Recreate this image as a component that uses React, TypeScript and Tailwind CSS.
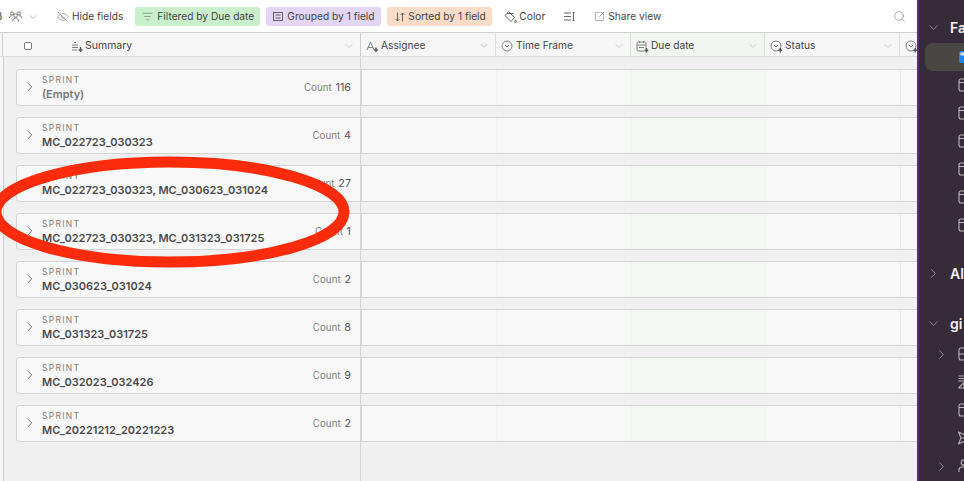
import { ChevronDown, ChevronRight, EyeOff, ListFilter, SquareArrowOutUpRight, Search } from "lucide-react";

const groups = [
  { name: "(Empty)", count: 116, empty: true },
  { name: "MC_022723_030323", count: 4 },
  { name: "MC_022723_030323, MC_030623_031024", count: 27 },
  { name: "MC_022723_030323, MC_031323_031725", count: 1 },
  { name: "MC_030623_031024", count: 2 },
  { name: "MC_031323_031725", count: 8 },
  { name: "MC_032023_032426", count: 9 },
  { name: "MC_20221212_20221223", count: 2 },
];

type Kind = "summary" | "text" | "select" | "selectPlus" | "date";

// little field type icons in the header
function TypeIcon({ kind }: { kind: Kind }) {
  return (
    <svg width="13" height="13" viewBox="0 0 13 13" fill="none" stroke="#777" strokeWidth="0.9" className="shrink-0">
      {kind === "summary" && (
        <>
          <path d="M3 2.5h2M1 5h6M1 7.5h6M1 10h5" />
          <path d="M9.5 7v5M7.5 10h4" strokeWidth="1.4" stroke="#555" />
        </>
      )}
      {kind === "text" && (
        <>
          <path d="M1 10l3.5-8L8 10M2.2 7.5h4.6" />
          <path d="M10 7.5v4.5M8.2 10h3.6" strokeWidth="1.4" stroke="#555" />
        </>
      )}
      {(kind === "select" || kind === "selectPlus") && (
        <>
          <circle cx="6" cy="6" r="5" />
          <path d="M4 5l2 2 2-2" />
        </>
      )}
      {kind === "selectPlus" && <path d="M10.3 8v4.5M8.5 10.3h3.6" strokeWidth="1.4" stroke="#555" />}
      {kind === "date" && (
        <>
          <rect x="1" y="2" width="9" height="9" rx="1.5" />
          <path d="M1 5h9M3.5 1v2M7.5 1v2M3 7.5h5" />
          <path d="M10.5 8v4.5M8.7 10.5h3.6" strokeWidth="1.4" stroke="#555" />
        </>
      )}
    </svg>
  );
}

function HeaderCell({ label, kind, width, green }: { label: string; kind: Kind; width: string; green?: boolean }) {
  return (
    <div className={`flex items-center shrink-0 pt-[3px] pl-[5px] pr-[5px] gap-[2px] border-r border-[#dcdcdc] ${width} ${green ? "bg-[#f1f6f0]" : ""}`}>
      <TypeIcon kind={kind} />
      <span className="text-[10.2px] text-[#444]">{label}</span>
      <ChevronDown size={12} strokeWidth={1} className="ml-auto text-[#999]" />
    </div>
  );
}

function GroupRow({ name, count, empty }: { name: string; count: number; empty?: boolean }) {
  return (
    <div className="flex h-[37px] shrink-0">
      <div className="flex items-center w-[345px] ml-[13px] pl-[6px] pr-[10px] bg-[#f8f8f8] border border-r-0 border-[#d4d4d4] rounded-l-[4px]">
        <ChevronRight size={14} strokeWidth={1.1} className="text-[#333] shrink-0 -mt-[1px]" />
        <div className="ml-[5px] flex flex-col leading-none pt-[1px]">
          <span className="text-[8.5px] tracking-[1.3px] text-[#808080] mb-[5px]">SPRINT</span>
          <span className={`text-[11px] font-semibold ${empty ? "text-[#777]" : "text-[#4a4a4a]"}`}>{name}</span>
        </div>
        <span className="ml-auto text-[9.8px] text-[#808080] pt-[2px]">
          Count <span className="ml-[1px] text-[10.8px] text-[#555]">{count}</span>
        </span>
      </div>
      <div className="flex flex-1 bg-[#f8f8f8] border-y border-l border-[#d4d4d4]">
        <div className="w-[135px] border-r border-[#f0f0f0]" />
        <div className="w-[135px] border-r border-[#f0f0f0]" />
        <div className="w-[134px] bg-[#f3f8f2] border-r border-[#f0f0f0]" />
        <div className="w-[135px] border-r border-[#ececec]" />
      </div>
    </div>
  );
}

function TableGlyph({ variant = "table" }: { variant?: "table" | "grid" | "form" | "plane" | "group" }) {
  const color = "#b9b5ba";
  return (
    <svg width="14" height="14" viewBox="0 0 14 14" fill="none" stroke={color} strokeWidth="1.1" className="shrink-0">
      {variant === "table" && (
        <>
          <rect x="1" y="1" width="13" height="12" rx="2" />
          <path d="M1 4.5h13" />
        </>
      )}
      {variant === "grid" && (
        <>
          <rect x="1" y="1" width="13" height="12" rx="2" />
          <path d="M1 7h13M7 1v12" />
        </>
      )}
      {variant === "form" && <path d="M0.5 1h13M0.5 3.5h13M0.5 6h6M0.5 13L6 7.5v5.5M0.5 13h6" />}
      {variant === "plane" && <path d="M0.5 1L13 7 0.5 13 3 7zM3 7h9" />}
      {variant === "group" && (
        <>
          <circle cx="6" cy="3.5" r="2.8" />
          <path d="M1 13v-2a3 3 0 0 1 3-3h9" />
        </>
      )}
    </svg>
  );
}

const lowerIcons = ["grid", "form", "table", "plane", "group"] as const;

export default function App() {
  return (
    <div className="relative flex w-[964px] h-[481px] overflow-hidden bg-white font-['Inter',sans-serif]">
      <div className="flex flex-col w-[917px] shrink-0">
        {/* toolbar */}
        <div className="flex items-center h-[33px] pt-[1px] shrink-0 border-b border-[#cfcfcf] text-[10.2px] text-[#444] relative">
          <span className="-ml-[4px] w-[11px]">3</span>
          <svg width="13" height="11" viewBox="0 0 13 11" fill="none" stroke="#555" strokeWidth="0.8" className="ml-[2px]">
            <circle cx="3" cy="2.5" r="1.6" />
            <circle cx="10" cy="2.5" r="1.6" />
            <circle cx="6.5" cy="4.5" r="1.8" />
            <path d="M0.5 7c0-1.5 1-2.5 2-2.5M12.5 7c0-1.5-1-2.5-2-2.5M3.5 10.500c0-2 1.300-3.500 3-3.500s3 1.500 3 3.500" />
          </svg>
          <ChevronDown size={12} strokeWidth={1} className="ml-[5px] text-[#777]" />
          <EyeOff size={12} strokeWidth={1} className="ml-[18px] text-[#555]" />
          <span className="ml-[3px]">Hide fields</span>
          <div className="flex items-center h-[19px] w-[125px] ml-[12px] pl-[7px] gap-[4px] rounded-[3px] bg-[#c9f0cb]">
            <ListFilter size={11} strokeWidth={1} />
            <span>Filtered by Due date</span>
          </div>
          <div className="flex items-center h-[19px] w-[115px] ml-[6px] pl-[7px] gap-[4px] rounded-[3px] bg-[#e3d5f6]">
            <svg width="10" height="9" viewBox="0 0 10 9" fill="none" stroke="#555" strokeWidth="0.9">
              <rect x="0.5" y="0.5" width="9" height="8" />
              <path d="M2.5 3h5M2.5 6h5" />
            </svg>
            <span>Grouped by 1 field</span>
          </div>
          <div className="flex items-center h-[19px] w-[105px] ml-[6px] pl-[8px] gap-[3px] rounded-[3px] bg-[#fbdcc9]">
            <svg width="10" height="10" viewBox="0 0 10 10" fill="none" stroke="#555" strokeWidth="0.9">
              <path d="M2.500 0.500v8.500M0.700 7l1.800 2 1.800-2M7.500 9.500V1M5.700 3l1.800-2 1.800 2" />
            </svg>
            <span>Sorted by 1 field</span>
          </div>
          <svg width="13" height="13" viewBox="0 0 13 13" fill="none" stroke="#555" strokeWidth="0.9" className="ml-[12px]">
            <path d="M4.500 1.500l6 6-3.500 4L1.200 5.700zM3 3.500h6.500M11.500 10c-.6.800-.9 1.300-.9 1.700a.9.900 0 0 0 1.800 0c0-.4-.3-.9-.9-1.700z" />
          </svg>
          <span className="ml-[2px]">Color</span>
          <svg width="11" height="9" viewBox="0 0 11 9" fill="none" stroke="#555" strokeWidth="0.9" className="ml-[19px]">
            <path d="M0 1h7M0 4.500h7M0 8h7M9.500 0.500v8M8.500 0.500h2M8.500 8.500h2" />
          </svg>
          <SquareArrowOutUpRight size={11} strokeWidth={1} className="ml-[19px]" />
          <span className="ml-[3px]">Share view</span>
          <Search size={13} strokeWidth={1} className="ml-auto mr-[11px] text-[#666]" />
        </div>

        {/* column headers */}
        <div className="flex h-[24px] shrink-0 bg-[#f6f6f6] border-b border-[#dadada]">
          <div className="relative flex items-center w-[361px] shrink-0 pt-[3px] border-r border-[#cfcfcf]">
            <div className="w-[3px] self-stretch border-r border-[#cfcfcf] shrink-0 -mt-[3px]" />
            <div className="ml-[21px] w-[8px] h-[8px] rounded-[2px] border border-[#777] bg-white shrink-0" />
            <div className="ml-[39px]"><TypeIcon kind="summary" /></div>
            <span className="ml-[1px] text-[10.5px] text-[#444]">Summary</span>
            <ChevronDown size={12} strokeWidth={1} className="ml-auto mr-[5px] text-[#999]" />
          </div>
          <HeaderCell label="Assignee" kind="text" width="w-[135px]" />
          <HeaderCell label="Time Frame" kind="select" width="w-[135px]" />
          <HeaderCell label="Due date" kind="date" width="w-[134px]" green />
          <HeaderCell label="Status" kind="selectPlus" width="w-[135px]" />
          <div className="flex items-center pl-[5px] pt-[3px]"><TypeIcon kind="selectPlus" /></div>
        </div>

        {/* grouped rows */}
        <div className="relative flex-1 flex flex-col gap-[11px] pt-[12px] bg-[#f0f0f0] border-l-[3px] border-[#f6f6f6]">
          <div className="absolute left-0 top-0 bottom-0 w-px bg-[#cfcfcf]" />
          <div className="absolute left-[357px] top-0 bottom-0 w-px bg-[#d4d4d4]" />
          {groups.map((g) => (
            <GroupRow key={g.name} {...g} />
          ))}
        </div>
      </div>

      {/* dark side panel */}
      <div className="flex-1 relative bg-[#362b38] border-l-2 border-[#5b2a73] text-[#f2f0f2] font-semibold text-[14px] overflow-hidden">
        <div className="flex items-center h-[28px] mt-[13px] pl-[7px]">
          <ChevronDown size={15} strokeWidth={1.1} className="text-[#bdb8be] shrink-0" />
          <span className="ml-[9px]">Fa</span>
        </div>
        <div className="flex items-center h-[28px] mt-[2px] ml-[6px] pl-[34px] rounded-l-[8px] bg-[#4a4644]">
          <svg width="14" height="14" viewBox="0 0 14 14" className="shrink-0">
            <rect x="0" y="1" width="14" height="12" rx="2" fill="#1e86f0" />
            <rect x="1.500" y="2.500" width="11" height="3" fill="#ddd" />
          </svg>
        </div>
        <div className="flex flex-col">
          {[0, 1, 2, 3, 4, 5].map((i) => (
            <div key={i} className="flex items-center h-[28px] pl-[39px]">
              <TableGlyph />
            </div>
          ))}
        </div>
        <div className="flex items-center h-[28px] mt-[20px] pl-[7px]">
          <ChevronRight size={15} strokeWidth={1.1} className="text-[#bdb8be] shrink-0" />
          <span className="ml-[9px]">Al</span>
        </div>
        <div className="flex items-center h-[28px] mt-[22px] pl-[7px]">
          <ChevronDown size={15} strokeWidth={1.1} className="text-[#bdb8be] shrink-0" />
          <span className="ml-[9px]">gi</span>
        </div>
        <div className="flex flex-col mt-[3px]">
          {lowerIcons.map((icon, i) => (
            <div key={icon} className="flex items-center h-[28px] pl-[15px]">
              <div className="w-[24px] shrink-0">
                {(i === 0 || i === 4) && <ChevronRight size={15} strokeWidth={1.1} className="text-[#bdb8be]" />}
              </div>
              <TableGlyph variant={icon} />
            </div>
          ))}
        </div>
      </div>

      {/* red annotation circled over the table */}
      <svg className="absolute left-0 top-0 pointer-events-none" width="400" height="300" viewBox="0 0 400 300" fill="none">
        <ellipse cx="170" cy="212" rx="174" ry="50" stroke="#fb2b0b" strokeWidth="11" />
      </svg>
    </div>
  );
}
